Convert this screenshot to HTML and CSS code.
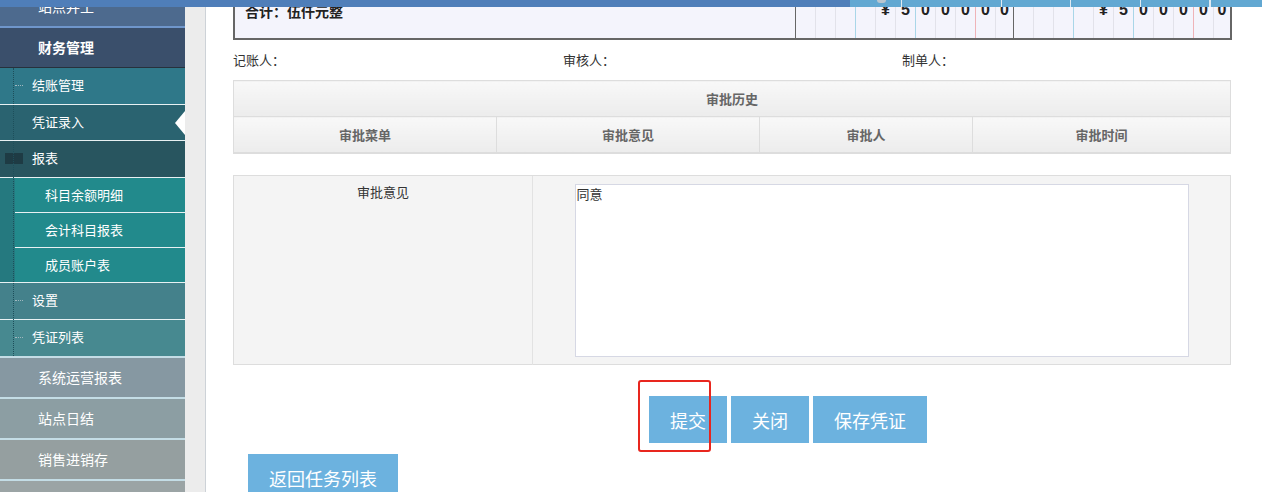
FILE: index.html
```html
<!DOCTYPE html>
<html lang="zh">

<head>
  <meta charset="utf-8">
  <link rel="stylesheet" href="styles.css">
</head>

<body>
  <div class="topbar">
    <div class="topLeft"></div>
    <div class="topRight">
      <span class="tab tabIcon"></span>
      <span class="tab t1"></span>
      <span class="tab t2"></span>
      <span class="tab t3"></span>
      <span class="tab t4"></span>
      <span class="tab"></span>
    </div>
  </div>

  <div class="layout">
    <div class="sidebar">
      <div class="menuItem first">站点并工</div>
      <div class="menuItem open">财务管理</div>
      <div class="subMenu">
        <div class="subItem tall tick c1">结账管理</div>
        <div class="subItem active c2">凭证录入</div>
        <div class="subItem tall c3"><span class="folder"></span>报表</div>
        <div class="leafList">
          <div class="leaf">科目余额明细</div>
          <div class="leaf">会计科目报表</div>
          <div class="leaf">成员账户表</div>
        </div>
        <div class="subItem tall tick c4">设置</div>
        <div class="subItem tall tick c5">凭证列表</div>
      </div>
      <div class="menuItem m1">系统运营报表</div>
      <div class="menuItem m2">站点日结</div>
      <div class="menuItem m3">销售进销存</div>
      <div class="menuItem m4"></div>
    </div>
    <div class="gutter"></div>

    <div class="main">
      <div class="voucher">
        <div class="sumLabel">合计：伍仟元整</div>
        <div class="amount">
          <span></span><span></span><span class="blue"></span><span></span><span>¥</span><span class="blue">5</span><span>0</span><span>0</span><span class="pink">0</span><span>0</span><span>0</span>
        </div>
        <div class="amount">
          <span></span><span></span><span class="blue"></span><span></span><span>¥</span><span class="blue">5</span><span>0</span><span>0</span><span class="pink">0</span><span>0</span><span>0</span>
        </div>
      </div>

      <div class="signers">
        <span>记账人：</span>
        <span>审核人：</span>
        <span>制单人：</span>
      </div>

      <table class="history">
        <tr>
          <th colspan="4">审批历史</th>
        </tr>
        <tr class="subHead">
          <th class="w262">审批菜单</th>
          <th class="w262">审批意见</th>
          <th class="w212">审批人</th>
          <th>审批时间</th>
        </tr>
      </table>

      <div class="opinion">
        <div class="opLabel">审批意见</div>
        <div class="opField">
          <textarea>同意</textarea>
        </div>
      </div>

      <div class="actions">
        <span class="mark"></span>
        <button class="btn">提交</button>
        <button class="btn">关闭</button>
        <button class="btn">保存凭证</button>
      </div>
      <button class="btn back">返回任务列表</button>
    </div>
  </div>
</body>

</html>
```

FILE: styles.css
```css
body {
  margin: 0;
  padding: 0;
  overflow: hidden;
  font-family: "Noto Sans CJK SC", "Liberation Sans", sans-serif;
  background: #fff;
}

.topbar {
  position: fixed;
  left: 0;
  top: 0;
  width: 100%;
  height: 7px;
  display: flex;
  z-index: 5;
}

.topLeft {
  width: 850px;
  background: #4f7eb9;
}

.topRight {
  flex: 1;
  display: flex;
  background: #62a8d2;
}

.tab {
  border-right: 1px solid #dfe9f1;
  height: 7px;
}

.tabIcon {
  width: 51px;
  position: relative;
}

.tabIcon::after {
  content: "";
  position: absolute;
  left: 27px;
  top: 0;
  width: 9px;
  height: 3px;
  border-radius: 0 0 4px 4px;
  background: #b9c6d0;
}

.t1 { width: 99px; }
.t2 { width: 68px; }
.t3 { width: 69px; }
.t4 { width: 68px; }

.layout {
  display: flex;
  height: 492px;
}

/* sidebar */

.sidebar {
  width: 185px;
  flex-shrink: 0;
  color: #fff;
  font-size: 14px;
  overflow: hidden;
}

.menuItem {
  height: 39px;
  line-height: 39px;
  padding-left: 38px;
  border-bottom: 2px solid #c4dde6;
}

.first {
  margin-top: -13px;
  background: #4d6a8e;
  border-bottom-color: #6f96cb;
}

.open {
  height: 39px;
  line-height: 39px;
  font-weight: bold;
  background: #3a4f6b;
  border-bottom: 1px solid #27313c;
}

.m1 { background: #8698a2; }
.m2 { background: #8c9ea3; }
.m3 { background: #959fa0; }
.m4 { background: #9ba4a5; }

.subMenu {
  position: relative;
  font-size: 13px;
  border-bottom: 2px solid #c4dde6;
}

.subMenu::before {
  content: "";
  position: absolute;
  left: 13px;
  top: 0;
  bottom: 0;
  border-left: 1px dotted #1d4e5a;
  z-index: 1;
}

.subItem {
  position: relative;
  height: 35px;
  line-height: 34px;
  padding-left: 32px;
  border-bottom: 1px solid #e8f1f3;
}

.subItem.tall {
  height: 36px;
}

.tick::before {
  content: "";
  position: absolute;
  left: 15px;
  top: 17px;
  width: 8px;
  border-top: 1px dotted #9fb7be;
}

.c1 { background: #2f7889; }
.c2 { background: #2a6370; }
.c3 { background: #28555f; }
.c4 { background: #44818b; }
.c5 { background: #478990; border-bottom: none; }

.active::after {
  content: "";
  position: absolute;
  right: 0;
  top: 6px;
  border-top: 12px solid transparent;
  border-bottom: 12px solid transparent;
  border-right: 10px solid #fff;
}

.folder {
  position: absolute;
  left: 5px;
  top: 12px;
  width: 18px;
  height: 11px;
  background: #1e3b44;
}

.leafList {
  background: #25797f;
  padding-left: 15px;
  border-bottom: 1px solid #e8f1f3;
}

.leaf {
  height: 34px;
  line-height: 34px;
  padding-left: 30px;
  background: #228a8c;
  border-bottom: 1px solid #e8f1f3;
}

.leaf:last-child {
  border-bottom: none;
}

.gutter {
  width: 20px;
  flex-shrink: 0;
  background: #ececec;
  border-right: 1px solid #cdd2d7;
}

/* main */

.main {
  flex: 1;
  padding: 0 30px 0 27px;
  color: #333;
  font-size: 13px;
}

.voucher {
  display: flex;
  width: max-content;
  height: 38px;
  background: #f4f4fc;
  border: 2px solid #666;
  border-top: none;
}

.sumLabel {
  width: 550px;
  padding-left: 10px;
  line-height: 22px;
  font-size: 14px;
  font-weight: bold;
  color: #222;
}

.amount {
  display: flex;
  border-left: 1px solid #666;
}

.amount span {
  width: 19px;
  border-right: 1px solid #e2e2ea;
  text-align: center;
  line-height: 20px;
  font-family: "Liberation Sans", sans-serif;
  font-weight: bold;
  font-size: 16px;
  color: #222;
}

.amount span.blue {
  border-right-color: #a9d6e8;
}

.amount span.pink {
  border-right-color: #efb3b8;
}

.amount span:last-child {
  width: 17px;
  border-right: none;
}

.amount:last-child span:last-child {
  width: 16px;
}

.signers {
  display: grid;
  grid-template-columns: 330px 339px 1fr;
  line-height: 20px;
  margin: 10px 0 10px;
}

.history {
  width: 998px;
  border-collapse: collapse;
}

.history th {
  height: 35px;
  padding: 0;
  border: 1px solid #ddd;
  background: linear-gradient(#f8f8f8, #ececec);
  color: #666;
  font-size: 13px;
}

.subHead th {
  border-bottom: 2px solid #ddd;
}

.w262 { width: 262px; }
.w212 { width: 212px; }

.opinion {
  display: grid;
  grid-template-columns: 299px 1fr;
  width: 996px;
  height: 188px;
  margin-top: 21px;
  border: 1px solid #ddd;
  background: #f4f4f4;
}

.opLabel {
  text-align: center;
  padding-top: 6px;
  border-right: 1px solid #e2e2e2;
}

.opField {
  padding: 8px 0;
}

.opField textarea {
  display: block;
  box-sizing: border-box;
  width: 614px;
  height: 173px;
  margin: 0 auto;
  padding: 0 1px;
  border: 1px solid #d6d8e4;
  font-family: "Noto Sans CJK SC", sans-serif;
  font-size: 13px;
  line-height: 17px;
  color: #333;
  resize: none;
}

.actions {
  position: relative;
  display: flex;
  gap: 4px;
  margin-top: 31px;
  padding-left: 416px;
}

.btn {
  height: 47px;
  padding: 0 21px;
  border: none;
  outline: none;
  background: #6cb2df;
  color: #fff;
  font-family: "Noto Sans CJK SC", sans-serif;
  font-size: 18px;
}

.back {
  margin: 11px 0 0 15px;
}

.mark {
  position: absolute;
  left: 405px;
  top: -16px;
  width: 69px;
  height: 68px;
  border: 2px solid #e8261e;
  border-radius: 3px;
}
```
